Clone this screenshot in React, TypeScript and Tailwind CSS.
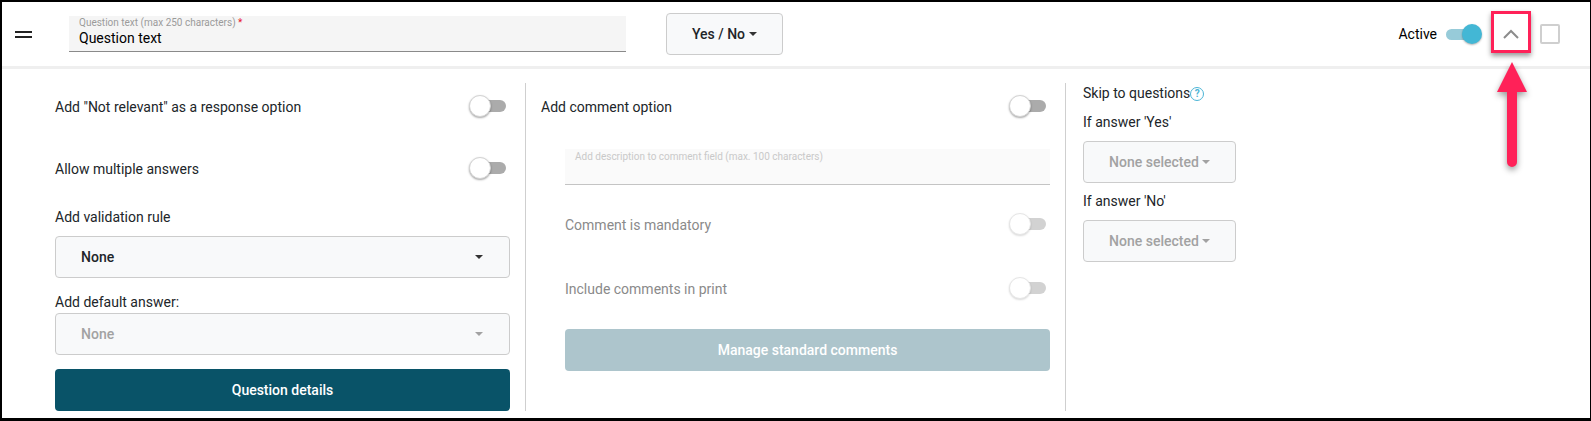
import React from 'react';

const font = { fontFamily: 'Roboto, sans-serif' };

function Toggle({ disabled = false, className = '' }: { disabled?: boolean; className?: string }) {
  return (
    <div className={`relative w-[37px] h-[22px] mb-[2px] flex items-center justify-end shrink-0 ${className}`}>
      <div className={`w-[26px] h-[12px] rounded-r-full ${disabled ? 'bg-[#d2d2d2]' : 'bg-[#ababab]'}`} />
      <div
        className={`absolute left-0 top-0 w-[22px] h-[22px] rounded-full bg-white border ${
          disabled ? 'border-[#e6e6e6] shadow-[0_1px_2px_rgba(0,0,0,0.15)]' : 'border-[#d4d4d4] shadow-[0_1px_2px_rgba(0,0,0,0.35)]'
        }`}
      />
    </div>
  );
}

function Caret({ className = '' }: { className?: string }) {
  return <span className={`w-0 h-0 border-x-[4px] border-x-transparent border-t-[4px] ${className}`} />;
}

function Row({ label, disabled = false, className = '' }: { label: string; disabled?: boolean; className?: string }) {
  return (
    <div className={`h-[48px] flex items-center justify-between ${className}`}>
      <span className={disabled ? 'text-[#8a8a8a]' : 'text-[#212529]'}>{label}</span>
      <Toggle disabled={disabled} className="mr-[4px]" />
    </div>
  );
}

function WideSelect({ disabled = false, className = '' }: { disabled?: boolean; className?: string }) {
  return (
    <div
      className={`h-[42px] pl-[25px] pr-[26px] flex items-center justify-between rounded-[4px] border border-[#ccc] bg-[#f8f9fa] font-medium ${
        disabled ? 'text-[#a2a2a2]' : 'text-[#212529]'
      } ${className}`}
    >
      None
      <Caret className={disabled ? 'border-t-[#a2a2a2]' : 'border-t-[#333]'} />
    </div>
  );
}

function SkipSelect() {
  return (
    <div className="w-[153px] h-[42px] flex items-center justify-center gap-[3px] rounded-[4px] border border-[#ccc] bg-[#f8f9fa] font-medium text-[#a2a2a2]">
      None selected
      <Caret className="border-t-[#a2a2a2]" />
    </div>
  );
}

export default function App() {
  return (
    <div
      style={font}
      className="relative w-[1591px] h-[421px] bg-white border-black border-t-2 border-l-2 border-r border-b-[3px] text-[14px] leading-[21px] text-[#212529] overflow-hidden"
    >
      <header className="h-[64px] flex items-center">
        <div className="ml-[13px] w-[17px] flex flex-col gap-[3px]">
          <div className="h-[2px] bg-[#222]" />
          <div className="h-[2px] bg-[#222]" />
        </div>
        <div className="ml-[37px] w-[557px] h-[36px] pl-[10px] pt-[1px] bg-[#f5f5f5] border-b border-[#8a8a8a]">
          <div className="text-[10px] leading-[12px] text-[#9b9b9b]">
            Question text (max 250 characters) <span className="text-[#e8112d]">*</span>
          </div>
          <div className="leading-[18px] text-black">Question text</div>
        </div>
        <button className="ml-[40px] w-[117px] h-[42px] flex items-center justify-center gap-[4px] rounded-[4px] border border-[#ccc] bg-[#f8f9fa] font-medium">
          Yes / No
          <Caret className="border-t-[#333]" />
        </button>
        <span className="ml-auto text-black">Active</span>
        <div className="relative ml-[9px] w-[36px] h-[20px] flex items-center">
          <div className="w-[30px] h-[11px] rounded-full bg-[#97cbd9]" />
          <div className="absolute right-0 top-0 w-[20px] h-[20px] rounded-full bg-[#43b7d5] shadow-[0_1px_2px_rgba(0,0,0,0.3)]" />
        </div>
        <div className="relative ml-[21px] w-[16px] h-[10px] flex items-center justify-center">
          <svg width="16" height="10" viewBox="0 0 16 10" fill="none" stroke="#8c8c8c" strokeWidth="2">
            <path d="M1 9 L8 2 L15 9" />
          </svg>
        </div>
        <div className="ml-[21px] mr-[30px] w-[20px] h-[20px] border-2 border-[#cfcfcf] rounded-[2px]" />
      </header>

      <div className="border-t-[3px] border-[#efefef]" />

      <div className="mt-[14px] h-[328px] flex">
        <section className="w-[524px] pl-[53px] pr-[15px] border-r border-[#cfcfcf]">
          <div className="h-[48px] flex items-center justify-between">
            <span>Add "Not relevant" as a response option</span>
            <Toggle className="mr-[4px]" />
          </div>
          <div className="mt-[14px] h-[48px] flex items-center justify-between">
            <span>Allow multiple answers</span>
            <Toggle className="mr-[4px]" />
          </div>
          <div className="mt-[14px]">Add validation rule</div>
          <WideSelect className="mt-[8px]" />
          <div className="mt-[14px]">Add default answer:</div>
          <WideSelect disabled />
          <button className="mt-[14px] w-full h-[42px] rounded-[4px] bg-[#095368] text-white font-medium">
            Question details
          </button>
        </section>

        <section className="w-[540px] pl-[15px] pr-[15px] border-r border-[#cfcfcf]">
          <Row label="Add comment option" />
          <div className="pl-[24px]">
            <div className="mt-[18px] h-[36px] pl-[10px] pt-[2px] bg-[#fafafa] border-b border-[#c4c4c4] text-[10px] leading-[12px] text-[#c9c9c9]">
              Add description to comment field (max. 100 characters)
            </div>
            <Row label="Comment is mandatory" disabled className="mt-[16px]" />
            <Row label="Include comments in print" disabled className="mt-[16px]" />
            <button className="mt-[16px] w-full h-[42px] rounded-[4px] bg-[#adc5cc] text-white font-medium">
              Manage standard comments
            </button>
          </div>
        </section>

        <section className="pl-[17px]">
          <div className="flex items-center h-[21px]">
            Skip to questions
            <span className="w-[14px] h-[14px] rounded-full border-[1.5px] border-[#4cb5d6] text-[#4cb5d6] text-[10px] leading-[11px] text-center font-bold">
              ?
            </span>
          </div>
          <div className="mt-[8px]">If answer 'Yes'</div>
          <div className="mt-[8px]">
            <SkipSelect />
          </div>
          <div className="mt-[8px]">If answer 'No'</div>
          <div className="mt-[8px]">
            <SkipSelect />
          </div>
        </section>
      </div>

      {/* annotation on top of the screenshot */}
      <div className="absolute left-[1489px] top-[9px] w-[40px] h-[42px] border-[3px] border-[#ff2158] shadow-[0_3px_5px_rgba(0,0,0,0.4)]" />
      <svg className="absolute left-[1490px] top-[56px]" width="40" height="116" viewBox="0 0 40 116" style={{ filter: 'drop-shadow(0 3px 3px rgba(0,0,0,0.4))' }}>
        <path d="M20 4 L35 34 L25 34 L25 104 A5 5 0 0 1 15 104 L15 34 L5 34 Z" fill="#ff2158" />
      </svg>
    </div>
  );
}
